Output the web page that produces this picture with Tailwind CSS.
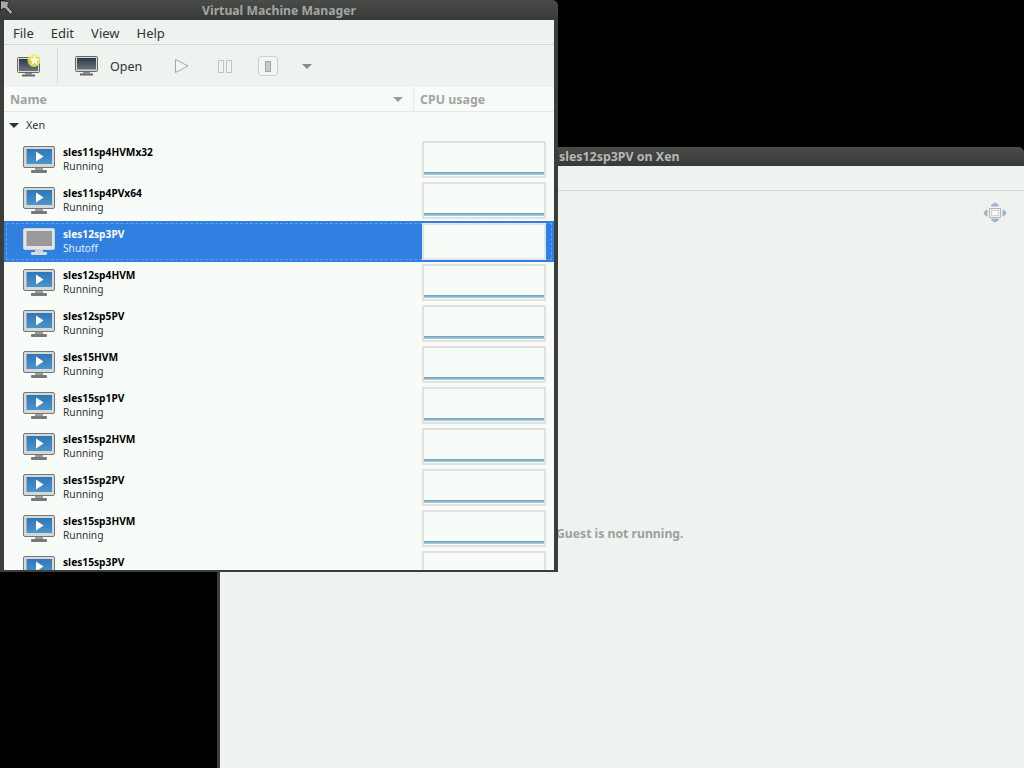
<!DOCTYPE html>
<html><head><meta charset="utf-8"><script src="https://cdn.jsdelivr.net/npm/@tailwindcss/browser@4"></script></head>
<body class="relative w-[1024px] h-[768px] overflow-hidden bg-black font-['Noto_Sans',sans-serif]">
<svg width="0" height="0" class="absolute">
<defs>
<linearGradient id="scr" x1="0" y1="0" x2="0" y2="1"><stop offset="0" stop-color="#2f78b8"/><stop offset="1" stop-color="#4c94cc"/></linearGradient>
<linearGradient id="dark" x1="0" y1="0" x2="0" y2="1"><stop offset="0" stop-color="#2d3a46"/><stop offset="1" stop-color="#69747d"/></linearGradient>
<symbol id="vm" viewBox="0 0 32 28">
<rect x="0.5" y="0.5" width="31" height="21" rx="1.5" fill="#d6d8d6" stroke="#73787a"/>
<rect x="3.500" y="3" width="25.500" height="15" fill="url(#scr)"/>
<path d="M13 5.500v10l7.500-5z" fill="#fff"/>
<rect x="12" y="22" width="8" height="2" fill="#9a9c9a"/>
<rect x="8" y="24" width="16" height="3" rx="1" fill="#77797a"/>
</symbol>
</defs>
</svg>

<!-- Back window -->
<section class="absolute left-[217px] top-[147px] w-[807px] h-[621px] bg-[#3b3e3b] rounded-t-md pl-[3px] pt-[19px] flex flex-col">
  <div class="absolute left-0 right-0 top-0 h-[19px] rounded-t-md bg-gradient-to-b from-[#4a4c49] to-[#383a37]"></div>
  <div class="absolute left-[342px] top-0 h-[19px] pt-[2px] flex items-center text-[12.400px] font-bold text-[#b5b8b5]">sles12sp3PV on Xen</div>
  <div class="flex-1 bg-[#eff3f0] flex flex-col">
    <div class="h-[24px] shrink-0 border-b border-[#d5d8d5] box-content"></div>
    <div class="relative flex-1">
      <svg class="absolute left-[763px] top-[11px]" width="24" height="22" viewBox="0 0 24 22">
        <rect x="6.500" y="6.500" width="11" height="9" fill="#eef0ee" stroke="#b9bab4"/><rect x="8.500" y="8.500" width="7" height="5" fill="#f7f8f7" stroke="#d4d4d0"/>
        <path d="M9 3.500 12 1.500l3 2zM9 17.500l3 2 3-2zM3.500 8.500 1.500 11l2 2.500zM20.500 8.500 22.500 11l-2 2.500z" fill="#9fb4d2" stroke="#9fb4d2" stroke-width="2" stroke-linejoin="round"/>
      </svg>
      <p class="absolute left-[336px] top-[334px] text-[12.200px] font-bold text-[#9ea09e]">Guest is not running.</p>
    </div>
  </div>
</section>

<!-- Main window -->
<section class="absolute left-0 top-0 w-[558px] h-[572px] bg-[#3b3e3b] rounded-t-md px-[4px] pb-[2px] flex flex-col overflow-hidden">
  <div class="absolute left-0 right-0 top-0 h-[20px] bg-gradient-to-b from-[#4a4c49] to-[#383a37]"></div>
  <header class="relative h-[20px] shrink-0 pt-[2px] flex items-center justify-center text-[12.200px] font-bold text-[#a3a6a3]">Virtual Machine Manager</header>
  <nav class="h-[25px] shrink-0 pt-[3px] bg-[#eff3f0] border-b border-[#d5d8d5] flex items-center gap-[17px] pl-[9px] text-[13px] text-[#2e3436]">
    <span>File</span><span>Edit</span><span>View</span><span>Help</span>
  </nav>
  <div class="h-[42px] shrink-0 bg-[#eff3f0] flex items-center relative">
    <svg class="ml-[13px] mb-[1px]" width="25" height="24" viewBox="0 0 25 24">
      <rect x="0.500" y="3.500" width="22" height="15" rx="1" fill="#d6d8d6" stroke="#666"/><rect x="2" y="5" width="19" height="12" fill="url(#dark)"/>
      <rect x="8" y="19" width="7" height="1.500" fill="#888"/><rect x="5" y="20.500" width="13" height="2" fill="#666"/>
      <circle cx="17" cy="6.500" r="6.500" fill="#f2f25a" opacity=".8"/><path d="m17.500 1 1.500 3.500 3.500.4-2.600 2.400.8 3.700-3.200-1.900-3.200 1.900.8-3.700-2.600-2.400 3.500-.4z" fill="#fdfbd8"/>
    </svg>
    <div class="ml-[15px] w-px h-[34px] bg-[#d5d8d5]"></div>
    <svg class="ml-[17px]" width="24" height="22" viewBox="0 0 24 22">
      <rect x="0.500" y="1.500" width="22" height="15" rx="1" fill="#d6d8d6" stroke="#666"/><rect x="2" y="3" width="19" height="11.500" fill="url(#dark)"/>
      <rect x="8" y="17" width="7" height="1.500" fill="#888"/><rect x="5" y="18.500" width="13" height="2" fill="#666"/>
    </svg>
    <span class="ml-[11px] pt-[2px] text-[12.500px] text-[#2e3436]">Open</span>
    <svg class="ml-[32px]" width="15" height="16" viewBox="0 0 15 16"><path d="M1.500 1.500v13L14 8z" fill="#f4f5f3" stroke="#a6a8a6"/></svg>
    <svg class="ml-[29px]" width="14" height="13" viewBox="0 0 14 13"><rect x="0.500" y="0.500" width="5" height="12" fill="#f1f3f1" stroke="#c4c6c4"/><rect x="8.500" y="0.500" width="5" height="12" fill="#f1f3f1" stroke="#c4c6c4"/></svg>
    <div class="ml-[26px] w-[20px] h-[20px] rounded-[3px] border border-[#cfd1cf] bg-[#f4f6f4] flex items-center justify-center">
      <span class="w-[6px] h-[11px] bg-[#c8cac8] border border-[#a5a7a5]"></span>
    </div>
    <span class="ml-[24px] w-0 h-0 border-x-[5px] border-x-transparent border-t-[5px] border-t-[#8a8c8a]"></span>
  </div>
  <div class="flex-1 bg-[#f8fcf9] overflow-hidden flex flex-col">
    <div class="h-[25px] shrink-0 flex border-b border-[#e6e9e6] text-[12.400px] font-bold text-[#a2a4a2]">
      <div class="w-[410px] relative flex items-center pl-[6px] pt-[2px] border-r border-[#e6e9e6]">Name<span class="absolute right-[10px] top-[10px] w-0 h-0 border-x-[5px] border-x-transparent border-t-[5px] border-t-[#9a9c9a]"></span></div>
      <div class="flex items-center pl-[6px] pt-[2px]">CPU usage</div>
    </div>
    <div class="h-[27px] shrink-0 flex items-center pl-[5px] gap-[7px] text-[10.800px] text-[#2e3436]">
      <span class="w-0 h-0 border-x-[5px] border-x-transparent border-t-[5px] border-t-[#2e3436]"></span>Xen
    </div>

    <div class="h-[41px] shrink-0 flex items-center text-[#2e3436]">
      <svg class="ml-[19px]" width="32" height="28"><use href="#vm"/></svg>
      <div class="ml-[8px] w-[359px] pb-[2px] text-[10.200px] leading-[14px]"><div class="font-bold text-black">sles11sp4HVMx32</div><div>Running</div></div>
      <div class="w-[124px] h-[37px] border-2 border-[#e3e1dd] bg-[#f8fcf9] flex items-end"><div class="w-full h-[3px] bg-gradient-to-b from-[#6d9bb3] to-[#a9d4e6] mb-[1px]"></div></div>
    </div>
    <div class="h-[41px] shrink-0 flex items-center text-[#2e3436]">
      <svg class="ml-[19px]" width="32" height="28"><use href="#vm"/></svg>
      <div class="ml-[8px] w-[359px] pb-[2px] text-[10.200px] leading-[14px]"><div class="font-bold text-black">sles11sp4PVx64</div><div>Running</div></div>
      <div class="w-[124px] h-[37px] border-2 border-[#e3e1dd] bg-[#f8fcf9] flex items-end"><div class="w-full h-[3px] bg-gradient-to-b from-[#6d9bb3] to-[#a9d4e6] mb-[1px]"></div></div>
    </div>
    <div class="relative h-[41px] shrink-0 flex items-center text-white bg-[#2f80e0]">
      <svg class="ml-[19px]" width="32" height="28" viewBox="0 0 32 28">
        <rect x="0.500" y="0.500" width="31" height="21" rx="1.500" fill="#e4e6e6" stroke="#cfd3d6"/><rect x="3.500" y="3" width="25.500" height="15" fill="#9a9a9a"/>
        <rect x="12" y="22" width="8" height="2" fill="#cfd3d6"/><rect x="8" y="24" width="16" height="3" rx="1" fill="#d8dcdf"/>
      </svg>
      <div class="ml-[8px] w-[359px] pb-[2px] text-[10.200px] leading-[14px]"><div class="font-bold">sles12sp3PV</div><div class="text-[#e4eefb]">Shutoff</div></div>
      <div class="w-[124px] h-[37px] border-2 border-[#dfe5ea] bg-[#f8fcf9]"></div>
      <div class="absolute left-[2px] right-[2px] top-[2px] bottom-[2px] border border-dashed border-white/25"></div>
    </div>
    <div class="h-[41px] shrink-0 flex items-center text-[#2e3436]">
      <svg class="ml-[19px]" width="32" height="28"><use href="#vm"/></svg>
      <div class="ml-[8px] w-[359px] pb-[2px] text-[10.200px] leading-[14px]"><div class="font-bold text-black">sles12sp4HVM</div><div>Running</div></div>
      <div class="w-[124px] h-[37px] border-2 border-[#e3e1dd] bg-[#f8fcf9] flex items-end"><div class="w-full h-[3px] bg-gradient-to-b from-[#6d9bb3] to-[#a9d4e6] mb-[1px]"></div></div>
    </div>
    <div class="h-[41px] shrink-0 flex items-center text-[#2e3436]">
      <svg class="ml-[19px]" width="32" height="28"><use href="#vm"/></svg>
      <div class="ml-[8px] w-[359px] pb-[2px] text-[10.200px] leading-[14px]"><div class="font-bold text-black">sles12sp5PV</div><div>Running</div></div>
      <div class="w-[124px] h-[37px] border-2 border-[#e3e1dd] bg-[#f8fcf9] flex items-end"><div class="w-full h-[3px] bg-gradient-to-b from-[#6d9bb3] to-[#a9d4e6] mb-[1px]"></div></div>
    </div>
    <div class="h-[41px] shrink-0 flex items-center text-[#2e3436]">
      <svg class="ml-[19px]" width="32" height="28"><use href="#vm"/></svg>
      <div class="ml-[8px] w-[359px] pb-[2px] text-[10.200px] leading-[14px]"><div class="font-bold text-black">sles15HVM</div><div>Running</div></div>
      <div class="w-[124px] h-[37px] border-2 border-[#e3e1dd] bg-[#f8fcf9] flex items-end"><div class="w-full h-[3px] bg-gradient-to-b from-[#6d9bb3] to-[#a9d4e6] mb-[1px]"></div></div>
    </div>
    <div class="h-[41px] shrink-0 flex items-center text-[#2e3436]">
      <svg class="ml-[19px]" width="32" height="28"><use href="#vm"/></svg>
      <div class="ml-[8px] w-[359px] pb-[2px] text-[10.200px] leading-[14px]"><div class="font-bold text-black">sles15sp1PV</div><div>Running</div></div>
      <div class="w-[124px] h-[37px] border-2 border-[#e3e1dd] bg-[#f8fcf9] flex items-end"><div class="w-full h-[3px] bg-gradient-to-b from-[#6d9bb3] to-[#a9d4e6] mb-[1px]"></div></div>
    </div>
    <div class="h-[41px] shrink-0 flex items-center text-[#2e3436]">
      <svg class="ml-[19px]" width="32" height="28"><use href="#vm"/></svg>
      <div class="ml-[8px] w-[359px] pb-[2px] text-[10.200px] leading-[14px]"><div class="font-bold text-black">sles15sp2HVM</div><div>Running</div></div>
      <div class="w-[124px] h-[37px] border-2 border-[#e3e1dd] bg-[#f8fcf9] flex items-end"><div class="w-full h-[3px] bg-gradient-to-b from-[#6d9bb3] to-[#a9d4e6] mb-[1px]"></div></div>
    </div>
    <div class="h-[41px] shrink-0 flex items-center text-[#2e3436]">
      <svg class="ml-[19px]" width="32" height="28"><use href="#vm"/></svg>
      <div class="ml-[8px] w-[359px] pb-[2px] text-[10.200px] leading-[14px]"><div class="font-bold text-black">sles15sp2PV</div><div>Running</div></div>
      <div class="w-[124px] h-[37px] border-2 border-[#e3e1dd] bg-[#f8fcf9] flex items-end"><div class="w-full h-[3px] bg-gradient-to-b from-[#6d9bb3] to-[#a9d4e6] mb-[1px]"></div></div>
    </div>
    <div class="h-[41px] shrink-0 flex items-center text-[#2e3436]">
      <svg class="ml-[19px]" width="32" height="28"><use href="#vm"/></svg>
      <div class="ml-[8px] w-[359px] pb-[2px] text-[10.200px] leading-[14px]"><div class="font-bold text-black">sles15sp3HVM</div><div>Running</div></div>
      <div class="w-[124px] h-[37px] border-2 border-[#e3e1dd] bg-[#f8fcf9] flex items-end"><div class="w-full h-[3px] bg-gradient-to-b from-[#6d9bb3] to-[#a9d4e6] mb-[1px]"></div></div>
    </div>
    <div class="h-[41px] shrink-0 flex items-center text-[#2e3436]">
      <svg class="ml-[19px]" width="32" height="28"><use href="#vm"/></svg>
      <div class="ml-[8px] w-[359px] pb-[2px] text-[10.200px] leading-[14px]"><div class="font-bold text-black">sles15sp3PV</div><div class="h-[14px]"></div></div>
      <div class="w-[124px] h-[37px] border-2 border-[#e3e1dd] bg-[#f8fcf9] flex items-end"><div class="w-full h-[3px] bg-gradient-to-b from-[#6d9bb3] to-[#a9d4e6] mb-[1px]"></div></div>
    </div>
  </div>
</section>

<!-- Mouse pointer -->
<svg class="absolute left-0 top-0" width="16" height="16" viewBox="0 0 16 16"><path d="M0.500 0.500v10l3-2.500 1 1 .6-.6 5.400 6 2.500-2.500-5.600-5.400 1.100-1.100-1-1 2.500-2.400z" fill="#a9aaa9" stroke="#111" stroke-width=".8"/></svg>
</body></html>
